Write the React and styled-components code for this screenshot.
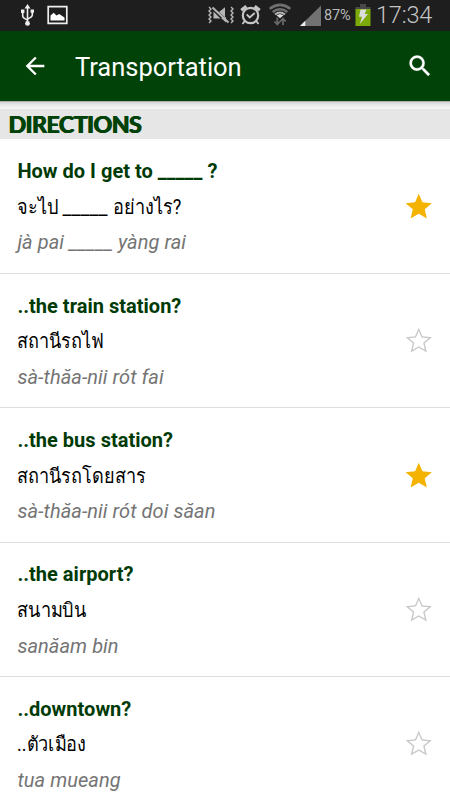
import React from 'react';
import styled, { createGlobalStyle } from 'styled-components';

const GlobalStyle = createGlobalStyle`
  * { box-sizing: border-box; }
  body { margin: 0; background: #fff; overflow: hidden; }
`;

const Screen = styled.div`
  width: 450px;
  height: 800px;
  overflow: hidden;
  background: #fff;
  font-family: Roboto, 'Noto Sans', sans-serif;
`;

const StatusBar = styled.div`
  display: flex;
  align-items: center;
  height: 31px;
  padding: 0 18px 0 20px;
  background: #1e1e1e;
`;

const StatusIcon = styled.svg`
  display: block;
  flex: none;
  width: ${(p) => p.$w}px;
  height: 31px;
  margin-left: ${(p) => p.$gap || 0}px;
`;

const Spacer = styled.div`
  flex: 1;
`;

const BatteryText = styled.span`
  width: 29px;
  margin-left: 3px;
  color: #b9b9b9;
  font-size: 14.5px;
  line-height: 31px;
  letter-spacing: -0.2px;
  white-space: nowrap;
`;

const Clock = styled.span`
  width: 56px;
  margin-left: 5px;
  color: #c6c6c6;
  font-size: 23.5px;
  font-weight: 300;
  line-height: 30px;
  letter-spacing: -0.2px;
  margin-top: -1px;
  white-space: nowrap;
`;

const Toolbar = styled.header`
  display: flex;
  align-items: center;
  height: 70px;
  padding: 0 16px 0 21px;
  background: #004208;
`;

const ToolbarIcon = styled.svg`
  display: block;
  flex: none;
  width: 28px;
  height: 28px;
  fill: #fff;
`;

const ToolbarTitle = styled.h1`
  flex: 1;
  margin: 2px 0 0 26px;
  color: #fff;
  font-size: 25.5px;
  font-weight: 400;
  line-height: 32px;
  letter-spacing: -0.03px;
`;

const ToolbarShadow = styled.div`
  height: 8px;
  background: linear-gradient(#9b9b9b 0, #d6d6d6 1.5px, #eaeaea 4px, #f6f6f6 8px);
`;

const SectionHeader = styled.h2`
  height: 30.4px;
  margin: 0;
  padding-left: 8px;
  background: #e6e6e6;
  color: #004208;
  font-family: Lato, sans-serif;
  font-size: 23px;
  font-weight: 700;
  line-height: 31px;
  letter-spacing: -0.4px;
  text-shadow: 0.6px 0 #004208, 1.2px 0 #004208;
`;

const PhraseRow = styled.li`
  display: flex;
  align-items: center;
  height: 134.4px;
  padding: 1px 16px 0 17.4px;
  border-bottom: 1px solid #dedede;
`;

const PhraseList = styled.ul`
  margin: 0;
  padding: 0;
  list-style: none;
`;

const PhraseText = styled.div`
  flex: 1;
  padding-top: 2px;
  white-space: nowrap;
`;

const Phrase = styled.div`
  height: 35.6px;
  color: #003a06;
  font-size: 20px;
  font-weight: 700;
  line-height: 35.6px;
  letter-spacing: 0.02px;
`;

const Native = styled(Phrase)`
  display: flex;
  gap: 5px;
  color: #000;
  font-weight: 400;
`;

const NativeRun = styled.span`
  flex: none;
  width: ${(p) => (p.$w ? `${p.$w}px` : 'auto')};
  transform: scaleX(${(p) => (p.$w ? 0.905 : 1)});
  transform-origin: left center;
`;

const Romanized = styled(Phrase)`
  color: #747474;
  font-style: italic;
  font-weight: 400;
  letter-spacing: 0.06px;
`;

const Star = styled.svg`
  display: block;
  flex: none;
  width: 31.5px;
  height: 31.5px;
  fill: ${(p) => (p.$on ? '#f5b301' : '#c8c8c8')};
`;

const STAR_FULL = 'M12 17.27 18.18 21l-1.64-7.03L22 9.24l-7.19-.61L12 2 9.19 8.63 2 9.24l5.46 4.73L5.82 21z';
const STAR_EMPTY =
  'M22 9.24l-7.19-.62L12 2 9.19 8.63 2 9.24l5.46 4.73L5.82 21 12 17.27 18.18 21l-1.63-7.03L22 9.24zM12 16.1l-4.6 2.8 1.23-5.3-4.1-3.55 5.35-.45L12 4.6l2.12 5 5.35.45-4.1 3.55 1.23 5.3z';

const phrases = [
  {
    en: 'How do I get to _____ ?',
    th: [{ text: 'จะไป', w: 40 }, { text: '_____' }, { text: 'อย่างไร?', w: 75 }],
    rom: 'jà pai _____ yàng rai',
    saved: true,
  },
  { en: '..the train station?', th: [{ text: 'สถานีรถไฟ', w: 88 }], rom: 'sà-thăa-nii rót fai', saved: false },
  { en: '..the bus station?', th: [{ text: 'สถานีรถโดยสาร', w: 128 }], rom: 'sà-thăa-nii rót doi săan', saved: true },
  { en: '..the airport?', th: [{ text: 'สนามบิน', w: 68 }], rom: 'sanăam bin', saved: false },
  { en: '..downtown?', th: [{ text: '..ตัวเมือง', w: 70 }], rom: 'tua mueang', saved: false },
];

function UsbIcon() {
  return (
    <StatusIcon $w={15} viewBox="0 0 15 31" fill="none" stroke="#eee" strokeWidth="1.6">
      <path d="M7.5 8v15M2.7 12v4q0 2 4.8 4M12.3 12v3q0 2-4.8 4" />
      <path d="M7.5 4l3 4.5h-6zM1 9.5h3.4v3.4H1zM10.6 9.5H14v3.2h-3.4z" fill="#eee" stroke="none" />
      <circle cx="7.5" cy="23.4" r="2.4" fill="#eee" stroke="none" />
    </StatusIcon>
  );
}

function PictureIcon() {
  return (
    <StatusIcon $w={21} $gap={12} viewBox="0 0 21 31">
      <path d="M1.2 6.7h18.6v16.6H1.2z" fill="none" stroke="#eee" strokeWidth="1.7" />
      <path d="M3.5 20.5v-5l3.2-2.7 2.8 2.6 2.7-1.5 5.3 3.6v3z" fill="#fff" />
    </StatusIcon>
  );
}

function MuteIcon() {
  return (
    <StatusIcon $w={27} viewBox="0 0 27 31" fill="none" stroke="#b5b5b5" strokeWidth="1.4">
      <path d="M2 7l2 2-2 2 2 2-2 2 2 2-2 2 2 2-2 2M24 7l2 2-2 2 2 2-2 2 2 2-2 2 2 2-2 2" />
      <path d="M6.5 11.5l7 7H6.5zM12 12l6-4.7v10.2zM14 18l5 4.5V17z" fill="#b5b5b5" stroke="none" />
      <path d="M5.5 7.5L21.5 22.5" strokeWidth="2" />
    </StatusIcon>
  );
}

function AlarmIcon() {
  return (
    <StatusIcon $w={21} $gap={6} viewBox="0 0 21 31" fill="none" stroke="#c5c5c5" strokeWidth="2.2">
      <circle cx="10.5" cy="15.5" r="7.7" />
      <path d="M1.3 10.2l5-4M19.7 10.2l-5-4" strokeWidth="3.2" />
      <path d="M4.8 21l-2.3 3M16.2 21l2.3 3M6.7 14.3l3 3.2 5-4.5" strokeWidth="1.9" />
    </StatusIcon>
  );
}

function WifiIcon() {
  return (
    <StatusIcon $w={22} $gap={8} viewBox="0 0 22 31" fill="none" stroke="#707070" strokeWidth="2.6">
      <path d="M.7 8.8Q11 .9 21.3 8.8M3.7 12Q11 6.5 18.3 12" />
      <path d="M6 14.6Q11 10.5 16 14.6" stroke="#b5b5b5" strokeWidth="2" />
      <path d="M7.5 15.3q3.5-2 7 0l-3.5 2.9z" fill="#ddd" stroke="none" />
      <path d="M8.3 17.5V24M5.5 21.5l2.8 3 2.8-3M14 25v-6M11.2 21.5l2.8-3 2.8 3" stroke="#686868" strokeWidth="1.8" />
    </StatusIcon>
  );
}

function SignalIcon() {
  return (
    <StatusIcon $w={21} $gap={9} viewBox="0 0 21 31">
      <path d="M0 26L21 5.5V26z" fill="#727272" />
      <path d="M0 26l5.3-5.3V26z" fill="#eee" />
    </StatusIcon>
  );
}

function BatteryIcon() {
  return (
    <StatusIcon $w={16} $gap={2} viewBox="0 0 16 31">
      <path d="M5 4h6v3h4.5v3H.5V7H5z" fill="#484848" />
      <path d="M.5 9h15v17H.5z" fill="#7daa08" />
      <path d="M5.5 9.5h6L9.7 14h3.2l-8 10 2.1-7.3H4z" fill="#ddd" />
    </StatusIcon>
  );
}

export default function App() {
  return (
    <Screen>
      <GlobalStyle />
      <StatusBar>
        <UsbIcon />
        <PictureIcon />
        <Spacer />
        <MuteIcon />
        <AlarmIcon />
        <WifiIcon />
        <SignalIcon />
        <BatteryText>87%</BatteryText>
        <BatteryIcon />
        <Clock>17:34</Clock>
      </StatusBar>
      <Toolbar>
        <ToolbarIcon viewBox="0 0 24 24">
          <path d="M20 11H7.83l5.59-5.59L12 4l-8 8 8 8 1.41-1.41L7.83 13H20z" />
        </ToolbarIcon>
        <ToolbarTitle>Transportation</ToolbarTitle>
        <ToolbarIcon viewBox="0 0 24 24">
          <path d="M15.5 14h-.79l-.28-.27A6.47 6.47 0 0 0 16 9.5 6.5 6.5 0 1 0 9.5 16c1.61 0 3.09-.59 4.23-1.57l.27.28v.79l5 4.99L20.49 19zm-6 0a4.5 4.5 0 1 1 0-9 4.5 4.5 0 0 1 0 9z" stroke="#fff" strokeWidth="0.3" />
        </ToolbarIcon>
      </Toolbar>
      <ToolbarShadow />
      <SectionHeader>DIRECTIONS</SectionHeader>
      <PhraseList>
        {phrases.map((p) => (
          <PhraseRow key={p.en}>
            <PhraseText>
              <Phrase>{p.en}</Phrase>
              <Native>
                {p.th.map((run) => (
                  <NativeRun key={run.text} $w={run.w}>
                    {run.text}
                  </NativeRun>
                ))}
              </Native>
              <Romanized>{p.rom}</Romanized>
            </PhraseText>
            <Star viewBox="0 0 24 24" $on={p.saved}>
              <path fillRule="evenodd" d={p.saved ? STAR_FULL : STAR_EMPTY} />
            </Star>
          </PhraseRow>
        ))}
      </PhraseList>
    </Screen>
  );
}
